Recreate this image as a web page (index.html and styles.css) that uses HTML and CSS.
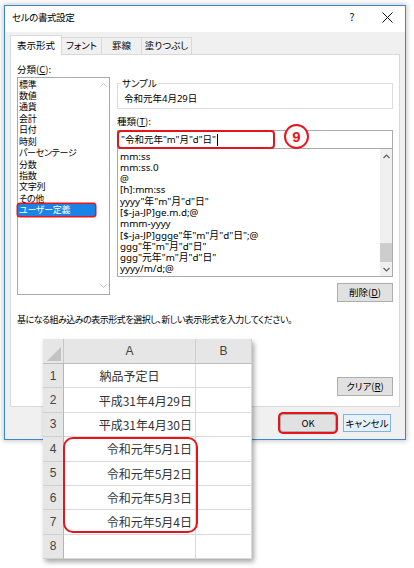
FILE: index.html
```html
<!DOCTYPE html>
<html lang="ja">
<head>
<meta charset="utf-8">
<title>セルの書式設定</title>
<link rel="stylesheet" href="styles.css">
</head>
<body>
<div class="dialog">
  <div class="titlebar">
    <span class="title">セルの書式設定</span>
    <span class="tb-help">?</span>
    <span class="tb-close"><svg width="11" height="11" viewBox="0 0 11 11"><path d="M0.5 0.5 L10.5 10.5 M10.5 0.5 L0.5 10.5" stroke="#111" stroke-width="1" fill="none"/></svg></span>
  </div>
  <div class="tabs">
    <div class="tab active">表示形式</div>
    <div class="tab t2">フォント</div>
    <div class="tab t3">罫線</div>
    <div class="tab t4">塗りつぶし</div>
  </div>
  <div class="panel">
    <div class="cols">
      <div class="leftcol">
        <div class="label">分類(<u>C</u>):</div>
        <div class="catlist">
          <ul class="items">
            <li>標準</li>
            <li>数値</li>
            <li>通貨</li>
            <li>会計</li>
            <li>日付</li>
            <li>時刻</li>
            <li>パーセンテージ</li>
            <li>分数</li>
            <li>指数</li>
            <li>文字列</li>
            <li>その他</li>
            <li class="sel">ユーザー定義</li>
          </ul>
          <div class="vs-disabled">
            <svg width="7" height="4" viewBox="0 0 7 4"><polyline points="0.5,3.5 3.5,0.5 6.5,3.5" fill="none" stroke="#c8c8c8" stroke-width="1"/></svg>
            <svg width="7" height="4" viewBox="0 0 7 4"><polyline points="0.5,0.5 3.5,3.5 6.5,0.5" fill="none" stroke="#c8c8c8" stroke-width="1"/></svg>
          </div>
        </div>
      </div>
      <div class="rightcol">
        <fieldset class="sample">
          <legend>サンプル</legend>
          <div class="sample-text">令和元年4月29日</div>
        </fieldset>
        <div class="label lbl2">種類(<u>T</u>):</div>
        <div class="inputwrap">
          <div class="input">"令和元年"m"月"d"日"<span class="caret"></span></div>
          <span class="hlbox"></span>
          <span class="badge">9</span>
        </div>
        <div class="fmtlist">
          <ul class="fitems">
            <li>mm:ss</li>
            <li>mm:ss.0</li>
            <li>@</li>
            <li>[h]:mm:ss</li>
            <li>yyyy"年"m"月"d"日"</li>
            <li>[$-ja-JP]ge.m.d;@</li>
            <li>mmm-yyyy</li>
            <li>[$-ja-JP]ggge"年"m"月"d"日";@</li>
            <li>ggg"年"m"月"d"日"</li>
            <li>ggg"元年"m"月"d"日"</li>
            <li>yyyy/m/d;@</li>
          </ul>
          <div class="vscroll">
            <div class="arrow"><svg width="7" height="5" viewBox="0 0 7 5"><polyline points="0.5,4 3.5,1 6.5,4" fill="none" stroke="#606060" stroke-width="1.2"/></svg></div>
            <div class="track"><div class="thumb"></div></div>
            <div class="arrow"><svg width="7" height="5" viewBox="0 0 7 5"><polyline points="0.5,1 3.5,4 6.5,1" fill="none" stroke="#606060" stroke-width="1.2"/></svg></div>
          </div>
        </div>
        <div class="btnrow"><button class="btn btn-del">削除(<u>D</u>)</button></div>
      </div>
    </div>
    <p class="hint">基になる組み込みの表示形式を選択し、新しい表示形式を入力してください。</p>
    <div class="btnrow btnrow-clear"><button class="btn btn-clear">クリア(<u>R</u>)</button></div>
  </div>
  <div class="footer">
    <button class="btn btn-ok">OK</button>
    <button class="btn btn-cancel">キャンセル</button>
  </div>
</div>

<div class="sheet">
  <div class="corner"><span class="tri"></span></div>
  <div class="colh">A</div>
  <div class="colh">B</div>
  <div class="rowh">1</div><div class="cell cc">納品予定日</div><div class="cell"></div>
  <div class="rowh">2</div><div class="cell">平成31年4月29日</div><div class="cell"></div>
  <div class="rowh">3</div><div class="cell">平成31年4月30日</div><div class="cell"></div>
  <div class="rowh">4</div><div class="cell">令和元年5月1日</div><div class="cell"></div>
  <div class="rowh">5</div><div class="cell">令和元年5月2日</div><div class="cell"></div>
  <div class="rowh">6</div><div class="cell">令和元年5月3日</div><div class="cell"></div>
  <div class="rowh">7</div><div class="cell">令和元年5月4日</div><div class="cell"></div>
  <div class="rowh">8</div><div class="cell"></div><div class="cell"></div>
  <div class="selbox"></div>
</div>
</body>
</html>
```

FILE: styles.css
```css
* { box-sizing: border-box; }
html, body { margin: 0; padding: 0; }
body {
  width: 414px;
  height: 568px;
  background: #fff;
  font-family: "Noto Sans CJK JP", "Noto Sans", sans-serif;
  font-size: 9.5px;
  color: #000;
  position: relative;
  overflow: hidden;
  font-feature-settings: "palt";
}
u { text-decoration: underline; text-underline-offset: 1px; }

.dialog {
  margin: 5px 0 0 4px;
  width: 402px;
  height: 435px;
  border: 1px solid #3a87d8;
  background: #f0f0f0;
  box-shadow: 0 0 5px 1px rgba(0, 0, 0, 0.22);
  display: flex;
  flex-direction: column;
}
.titlebar {
  flex: none;
  height: 26px;
  background: #fff;
  display: flex;
  align-items: flex-start;
  padding: 4px 12px 0 7px;
  line-height: 14px;
  font-size: 9.5px;
}
.title { flex: 1; letter-spacing: -0.4px; }
.tb-help { width: 10px; text-align: center; margin-right: 24px; font-size: 10.5px; }
.tb-close { width: 12px; display: flex; justify-content: center; padding-top: 2px; }

.tabs {
  flex: none;
  display: flex;
  align-items: flex-end;
  height: 19px;
  margin-top: 3px;
  padding-left: 5px;
  position: relative;
  z-index: 1;
}
.tab {
  height: 17px;
  border: 1px solid #d9d9d9;
  border-bottom: none;
  border-left: none;
  background: #f0f0f0;
  display: flex;
  align-items: center;
  justify-content: center;
  line-height: 1;
}
.tab.active {
  height: 20px;
  margin-bottom: -1px;
  background: #fff;
  border-left: 1px solid #d9d9d9;
  width: 52px;
}
.t2 { width: 40px; }
.t3 { width: 40px; }
.t4 { width: 50px; }

.panel {
  flex: none;
  margin-left: 5px;
  width: 390px;
  height: 353px;
  background: #fff;
  border: 1px solid #d9d9d9;
  padding: 7px 6px 0 6px;
  display: flex;
  flex-direction: column;
}
.cols { display: flex; gap: 7px; }
.leftcol { width: 93px; }
.rightcol { width: 276px; }
.label { height: 15px; line-height: 14px; }

.catlist {
  height: 218px;
  border: 1px solid #aaa;
  display: flex;
}
.items {
  list-style: none;
  margin: 0;
  padding: 0.5px 0 0 0;
  flex: 1;
  font-size: 9px;
  letter-spacing: -0.3px;
}
.items li {
  height: 11.45px;
  line-height: 11.45px;
  padding-left: 1px;
  white-space: nowrap;
}
.items li.sel {
  background: #1c83e6;
  color: #fff;
  margin-right: 2px;
  border-radius: 2px;
  box-shadow: 0 0 0 1.5px #e8141c;
}
.vs-disabled {
  width: 12px;
  display: flex;
  flex-direction: column;
  justify-content: space-between;
  align-items: center;
  padding: 5px 0 6px;
}

.sample {
  margin: 15px 0 0 0;
  padding: 0 6px;
  border: 1px solid #dcdcdc;
  height: 32px;
}
.sample legend {
  padding: 0 1px;
  margin-left: -3px;
  line-height: 12px;
}
.sample-text {
  line-height: 14px;
  padding-top: 3px;
  font-family: "Noto Sans", "Noto Sans CJK JP", sans-serif;
  font-size: 9.5px;
}
.lbl2 { margin-top: 5px; height: 14px; margin-bottom: 2px; }

.inputwrap { position: relative; height: 19px; }
.input {
  height: 19px;
  border: 1px solid #aaa;
  padding-left: 3px;
  line-height: 17px;
  font-family: "Noto Sans", "Noto Sans CJK JP", sans-serif;
  font-size: 9.5px;
  display: flex;
  align-items: center;
  white-space: nowrap;
}
.caret { display: inline-block; width: 1px; height: 12px; background: #000; margin-left: 1px; }
.hlbox {
  position: absolute;
  left: 0;
  top: 0;
  width: 158px;
  height: 19px;
  border: 2px solid #e8141c;
  border-radius: 4px;
}
.badge {
  position: absolute;
  left: 167px;
  top: -6px;
  width: 25px;
  height: 25px;
  border: 2px solid #e8141c;
  border-radius: 50%;
  background: #fff;
  color: #e8141c;
  font-family: "Liberation Sans", Arial, sans-serif;
  font-weight: bold;
  font-size: 15px;
  display: flex;
  align-items: center;
  justify-content: center;
  line-height: 1;
}

.fmtlist {
  margin-top: -1px;
  height: 129px;
  border: 1px solid #aaa;
  display: flex;
}
.fitems {
  list-style: none;
  margin: 0;
  padding: 1.5px 0 0 2px;
  flex: 1;
  font-family: "Noto Sans", "Noto Sans CJK JP", sans-serif;
  font-size: 9.8px;
}
.fitems li { height: 11.3px; line-height: 11.3px; white-space: nowrap; }
.vscroll {
  width: 12px;
  background: #f0f0f0;
  display: flex;
  flex-direction: column;
}
.vscroll .arrow { height: 14px; display: flex; align-items: center; justify-content: center; flex: none; }
.vscroll .track { flex: 1; display: flex; flex-direction: column; justify-content: flex-end; }
.thumb { height: 19px; background: #cdcdcd; }

.btnrow { display: flex; justify-content: flex-end; }
.btn {
  font-family: "Noto Sans CJK JP", sans-serif;
  font-feature-settings: "palt";
  font-size: 9.5px;
  color: #000;
  background: #e1e1e1;
  border: 1px solid #adadad;
  padding: 0;
  height: 19px;
  line-height: 17px;
  border-radius: 0;
}
.btn-del { margin-top: 6px; width: 56px; }
.hint {
  margin: 11px 0 0 0;
  line-height: 14px;
  white-space: nowrap;
  font-size: 9px;
  letter-spacing: -0.5px;
}
.btnrow-clear { width: 376px; margin-top: 50px; }
.btn-clear { width: 56px; }

.footer {
  flex: none;
  display: flex;
  justify-content: flex-end;
  gap: 7px;
  padding: 7px 14px 0 0;
}
.btn-ok {
  width: 56px;
  height: 18px;
  box-shadow: 0 0 0 2px #e8141c;
  border-radius: 3px;
}
.btn-cancel {
  width: 48px;
  height: 18px;
  background: #e5f1fb;
  border-color: #7fb2e5;
}

/* spreadsheet overlay */
.sheet {
  position: absolute;
  left: 43px;
  top: 339px;
  width: 209px;
  display: grid;
  grid-template-columns: 21px 132px 56px;
  grid-template-rows: 25px repeat(8, 24.375px);
  background: #fff;
  box-shadow: 2px 3px 5px rgba(0, 0, 0, 0.35);
  font-family: "Noto Sans CJK JP", sans-serif;
  font-feature-settings: normal;
  font-size: 12px;
}
.corner {
  background: #e6e6e6;
  border-right: 1px solid #c6c6c6;
  border-bottom: 1px solid #bdbdbd;
  display: flex;
  align-items: flex-end;
  justify-content: flex-end;
  padding: 0 2px 2px 0;
}
.tri {
  width: 14px;
  height: 14px;
  background: #c2c2c2;
  clip-path: polygon(100% 0, 100% 100%, 0 100%);
}
.colh {
  background: #e6e6e6;
  border-right: 1px solid #cfcfcf;
  border-bottom: 1px solid #bdbdbd;
  display: flex;
  align-items: center;
  justify-content: center;
  color: #444;
  font-family: "Liberation Sans", Arial, sans-serif;
  font-size: 12px;
}
.rowh {
  background: #e6e6e6;
  border-right: 1px solid #b5b5b5;
  border-bottom: 1px solid #cfcfcf;
  display: flex;
  align-items: center;
  justify-content: center;
  color: #444;
  font-family: "Liberation Sans", Arial, sans-serif;
  font-size: 12px;
}
.cell {
  border-right: 1px solid #d9d9d9;
  border-bottom: 1px solid #d9d9d9;
  display: flex;
  align-items: center;
  justify-content: flex-end;
  padding-right: 3px;
  color: #333;
  white-space: nowrap;
}
.cell.cc { justify-content: center; padding-right: 0; }
.selbox {
  position: absolute;
  left: 20px;
  top: 98px;
  width: 135px;
  height: 96px;
  border: 2px solid #e8141c;
  border-radius: 10px;
}
```
